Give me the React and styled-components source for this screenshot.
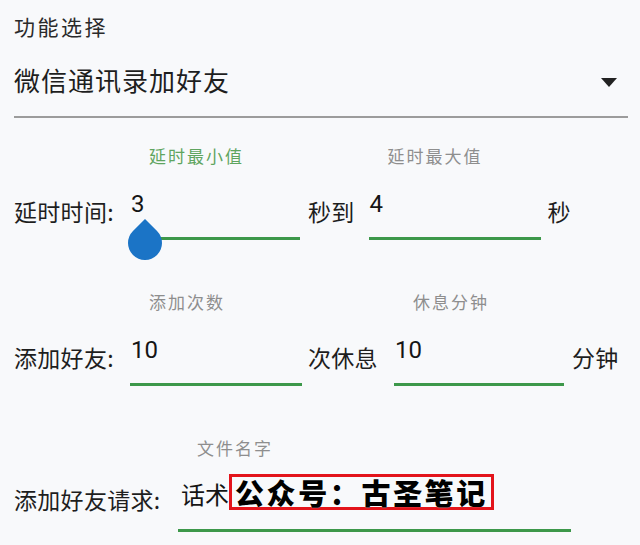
import React from "react";
import styled, { createGlobalStyle } from "styled-components";

const GlobalStyle = createGlobalStyle`
  body {
    margin: 0;
    background: #f8f9fb;
    font-family: "Noto Sans CJK SC", "Noto Sans", sans-serif;
    color: #222;
  }
`;

const Page = styled.div`
  width: 640px;
  height: 545px;
  box-sizing: border-box;
  padding: 12px 12px 0 14px;
  overflow: hidden;
`;

const Caption = styled.div`
  font-size: 21px;
  line-height: 28px;
  letter-spacing: 2.5px;
  color: #2a2a2a;
`;

const SelectRow = styled.div`
  display: flex;
  align-items: center;
  justify-content: space-between;
  height: 36px;
  margin-top: 22px;
`;

const SelectText = styled.div`
  font-size: 26px;
  line-height: 36px;
  letter-spacing: 1px;
  color: #1e1e1e;
`;

const Arrow = styled.svg`
  width: 16px;
  height: 9px;
  margin: 5px 11px 0 0;
  fill: #222;
`;

const Divider = styled.div`
  height: 2px;
  margin-top: 18px;
  background: #9c9c9c;
`;

const Form = styled.div`
  display: flex;
  flex-direction: column;
  gap: 50px;
  margin-top: 26px;
`;

const Row = styled.div`
  display: flex;
  align-items: flex-start;
`;

const Text = styled.div`
  flex-shrink: 0;
  width: ${(p) => (p.$width ? `${p.$width}px` : "auto")};
  margin: ${(p) => p.$top || 52}px ${(p) => p.$right || 0}px 0
    ${(p) => p.$left || 0}px;
  font-size: 23px;
  line-height: 30px;
  letter-spacing: 0.3px;
  white-space: nowrap;
  color: #1e1e1e;
`;

const Field = styled.div`
  position: relative;
  flex-shrink: 0;
  width: ${(p) => p.$width}px;
`;

const FloatLabel = styled.div`
  height: 24px;
  padding-left: 19px;
  font-size: 17px;
  line-height: 24px;
  letter-spacing: 2px;
  color: ${(p) => (p.$active ? "#5fa55f" : "#8e8e8e")};
  white-space: nowrap;
`;

const Value = styled.div`
  display: flex;
  align-items: center;
  height: 32px;
  margin-top: 20px;
  padding-left: ${(p) => p.$indent || 1}px;
  font-family: Roboto, "Noto Sans CJK SC", sans-serif;
  font-size: 24px;
  line-height: 32px;
  color: #151515;
  white-space: nowrap;
`;

const Underline = styled.div`
  height: 3px;
  margin-top: 17px;
  background: #3d984a;
`;

const Thumb = styled.svg`
  position: absolute;
  left: -2px;
  top: 75px;
  width: 34px;
  height: 41px;
  fill: #1b74c6;
`;

const Highlight = styled.span`
  display: inline-block;
  height: 30px;
  margin-bottom: 8px;
  padding: 0 3px 0 3px;
  border: 3px solid #e3141b;
  font-family: "Noto Sans CJK SC", sans-serif;
  font-weight: 900;
  font-size: 29px;
  line-height: 30px;
  letter-spacing: 2.6px;
  color: #000;
  text-shadow: 0 0 1px #fff;
`;

const InputField = ({ width, hint, active, value, indent, children }) => (
  <Field $width={width}>
    <FloatLabel $active={active}>{hint}</FloatLabel>
    <Value $indent={indent}>{value}</Value>
    <Underline />
    {children}
  </Field>
);

const App = () => {
  return (
    <Page>
      <GlobalStyle />
      <Caption>功能选择</Caption>
      <SelectRow>
        <SelectText>微信通讯录加好友</SelectText>
        <Arrow viewBox="0 0 16 9">
          <path d="M0 0h16L8 9z" />
        </Arrow>
      </SelectRow>
      <Divider />

      <Form>
        <Row>
          <Text $width={116}>延时时间:</Text>
          <InputField width={170} hint="延时最小值" active value="3">
            <Thumb viewBox="0 0 34 41">
              <path d="M17 0 L29.02 11.98 A17 17 0 1 1 4.98 11.98 Z" />
            </Thumb>
          </InputField>
          <Text $left={8} $right={14}>
            秒到
          </Text>
          <InputField width={172} hint="延时最大值" value="4" />
          <Text $left={7}>秒</Text>
        </Row>

        <Row>
          <Text $width={116}>添加好友:</Text>
          <InputField width={172} hint="添加次数" value="10" />
          <Text $left={6} $right={16}>
            次休息
          </Text>
          <InputField width={170} hint="休息分钟" value="10" />
          <Text $left={8}>分钟</Text>
        </Row>

        <Row>
          <Text $width={164} $top={48}>
            添加好友请求:
          </Text>
          <InputField
            width={393}
            hint="文件名字"
            indent={3}
            value={
              <>
                话术<Highlight>公众号：古圣笔记</Highlight>
              </>
            }
          />
        </Row>
      </Form>
    </Page>
  );
};

export default App;
